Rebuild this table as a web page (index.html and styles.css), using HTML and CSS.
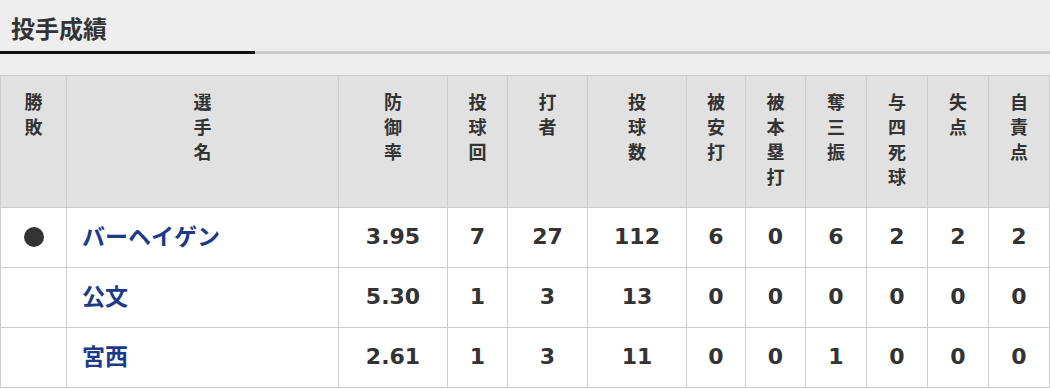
FILE: index.html
```html
<!DOCTYPE html>
<html lang="ja">
<head>
<meta charset="utf-8">
<title>投手成績</title>
<link rel="stylesheet" href="styles.css">
</head>
<body>
<section class="section">
  <h2 class="title">投手成績</h2>
  <div class="tab-bar"><span class="tab-active"></span><span class="tab-rest"></span></div>
  <table class="stats">
    <colgroup>
      <col class="c-res"><col class="c-name"><col class="c-era"><col class="c-ip"><col class="c-bf"><col class="c-np">
      <col class="c-s"><col class="c-s"><col class="c-s2"><col class="c-s2"><col class="c-s2"><col class="c-s2">
    </colgroup>
    <thead>
      <tr>
        <th>勝<br>敗</th>
        <th>選<br>手<br>名</th>
        <th>防<br>御<br>率</th>
        <th>投<br>球<br>回</th>
        <th>打<br>者</th>
        <th>投<br>球<br>数</th>
        <th>被<br>安<br>打</th>
        <th>被<br>本<br>塁<br>打</th>
        <th>奪<br>三<br>振</th>
        <th>与<br>四<br>死<br>球</th>
        <th>失<br>点</th>
        <th>自<br>責<br>点</th>
      </tr>
    </thead>
    <tbody>
      <tr>
        <td><span class="mark-loss"></span></td>
        <td class="name"><a href="#">バーヘイゲン</a></td>
        <td>3.95</td><td>7</td><td>27</td><td>112</td><td>6</td><td>0</td><td>6</td><td>2</td><td>2</td><td>2</td>
      </tr>
      <tr>
        <td></td>
        <td class="name"><a href="#">公文</a></td>
        <td>5.30</td><td>1</td><td>3</td><td>13</td><td>0</td><td>0</td><td>0</td><td>0</td><td>0</td><td>0</td>
      </tr>
      <tr>
        <td></td>
        <td class="name"><a href="#">宮西</a></td>
        <td>2.61</td><td>1</td><td>3</td><td>11</td><td>0</td><td>0</td><td>1</td><td>0</td><td>0</td><td>0</td>
      </tr>
    </tbody>
  </table>
</section>
</body>
</html>
```
FILE: styles.css
```css
* { box-sizing: border-box; }
html, body { margin: 0; padding: 0; }
body {
  background: #eeeeee;
  color: #333333;
  font-family: "Noto Sans CJK JP", sans-serif;
}
.title {
  margin: 0;
  height: 51px;
  padding: 16px 0 0 11px;
  font-size: 24px;
  line-height: 24px;
  font-weight: 700;
  color: #333333;
}
.tab-bar {
  display: flex;
  height: 3px;
  margin-bottom: 21px;
}
.tab-active { width: 255px; background: #111111; }
.tab-rest { flex: 1; background: #cccccc; }

.stats {
  width: 1050px;
  table-layout: fixed;
  border-collapse: separate;
  border-spacing: 0;
  border-left: 1px solid #cccccc;
  border-top: 1px solid #cccccc;
}
.c-res { width: 66px; }
.c-name { width: 272px; }
.c-era { width: 109px; }
.c-ip { width: 60px; }
.c-bf { width: 80px; }
.c-np { width: 99px; }
.c-s { width: 59px; }
.c-s:nth-child(8) { width: 60px; }
.c-s2 { width: 61px; }
.stats th, .stats td {
  border-right: 1px solid #cccccc;
  border-bottom: 1px solid #cccccc;
  padding: 0;
  text-align: center;
}
.stats th {
  height: 132px;
  vertical-align: top;
  padding-top: 13px;
  background: #e1e1e1;
  font-size: 18px;
  line-height: 25px;
  font-weight: 700;
  color: #333333;
}
.stats td {
  height: 60px;
  vertical-align: middle;
  padding-bottom: 3px;
  background: #ffffff;
  font-family: "DejaVu Sans", "Noto Sans CJK JP", sans-serif;
  font-size: 22px;
  font-weight: 700;
  color: #333333;
}
.stats td.name {
  text-align: left;
  padding-left: 15px;
  padding-bottom: 5px;
  font-family: "Noto Sans CJK JP", sans-serif;
  font-size: 23px;
}
.name a {
  color: #1d3a8a;
  text-decoration: none;
}
.mark-loss {
  display: inline-block;
  width: 20px;
  height: 20px;
  border-radius: 50%;
  background: #333333;
  vertical-align: middle;
  margin-top: -2px;
}
```
